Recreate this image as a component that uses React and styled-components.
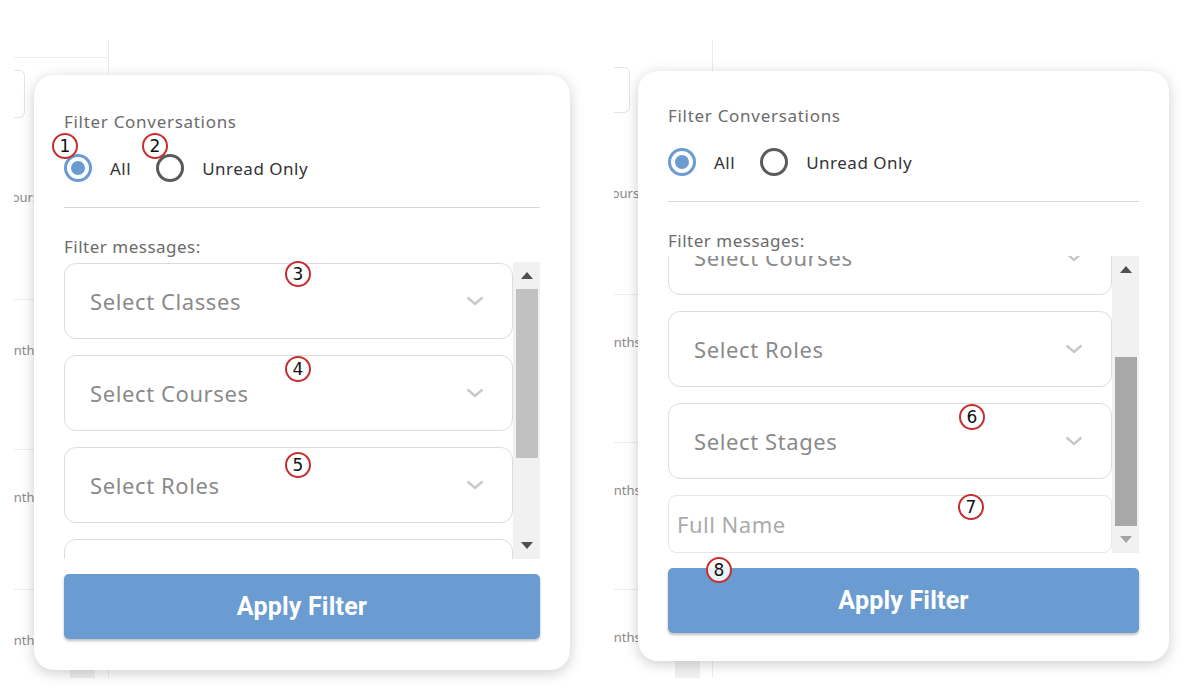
import React, { useLayoutEffect, useRef, useState } from "react";
import styled, { createGlobalStyle } from "styled-components";

const GlobalStyle = createGlobalStyle`
  html, body { margin: 0; padding: 0; background: #fff; }
  body { font-family: "Noto Sans", "Open Sans", sans-serif; }
  * { box-sizing: border-box; }
`;

const Page = styled.div`
  display: flex;
  gap: 24px;
  width: 1190px;
  height: 688px;
  padding: 40px 0 0 14px;
  overflow: hidden;
`;

const Scene = styled.div`
  position: relative;
  width: 576px;
  height: 638px;
`;

/* faint page behind the popup */
const BackPage = styled.div`
  display: flex;
  flex-direction: column;
  width: ${p => p.$width}px;
  height: 100%;
  border-right: 1px solid #ececec;
  overflow: hidden;
`;
const BackHeader = styled.div`
  height: 18px;
  flex-shrink: 0;
  border-bottom: 1px solid ${p => (p.$line ? "#ececec" : "transparent")};
`;
const BackSearch = styled.div`
  flex-shrink: 0;
  margin-top: ${p => p.$top}px;
  width: ${p => p.$w}px;
  height: ${p => p.$h}px;
  border: 1px solid #e4e4e4;
  border-left: none;
  border-radius: 0 6px 6px 0;
`;
const BackRow = styled.div`
  flex-shrink: 0;
  height: ${p => p.$h}px;
  padding-top: ${p => p.$pt}px;
  border-bottom: 1px solid ${p => (p.$last ? "transparent" : "#ececec")};
  font-size: 13px;
  line-height: 18px;
  color: #8a8a8a;
  white-space: nowrap;
  text-indent: ${p => p.$indent}px;
`;
const BackFooter = styled.div`
  flex-shrink: 0;
  margin-left: ${p => p.$left}px;
  width: 25px;
  height: 18px;
  background: #efefef;
`;

const Card = styled.div`
  position: absolute;
  left: ${p => p.$left}px;
  top: ${p => p.$top}px;
  width: ${p => p.$width}px;
  display: flex;
  flex-direction: column;
  padding: ${p => p.$padTop}px 30px ${p => p.$padBottom}px;
  background: #fff;
  border-radius: 20px;
  box-shadow: 0 3px 14px rgba(0, 0, 0, 0.2);
`;

const Title = styled.div`
  font-size: 17px;
  line-height: 22px;
  letter-spacing: 0.7px;
  color: #6b6b6b;
`;

const RadioRow = styled.div`
  display: flex;
  align-items: center;
  height: 30px;
  margin-top: 20px;
`;
const RadioOption = styled.label`
  display: flex;
  align-items: center;
  gap: 18px;
  margin-right: 25px;
  font-size: 17px;
  letter-spacing: 0.5px;
  color: #333;
`;
const RadioDot = styled.span`
  position: relative;
  width: 28px;
  height: 28px;
  border-radius: 50%;
  border: 3px solid ${p => (p.$checked ? "#6a9bd1" : "#5a5a5a")};
  &::after {
    content: "";
    display: ${p => (p.$checked ? "block" : "none")};
    position: absolute;
    left: 4px;
    top: 4px;
    width: 14px;
    height: 14px;
    border-radius: 50%;
    background: #6a9bd1;
  }
`;

const Divider = styled.div`
  height: 1px;
  margin-top: 24px;
  background: #d6d6db;
`;

const SectionLabel = styled.div`
  margin-top: 28px;
  font-size: 17px;
  line-height: 22px;
  color: #6b6b6b;
  letter-spacing: 0.5px;
`;

const ScrollArea = styled.div`
  display: flex;
  height: 297px;
  margin-top: 4px;
`;
const Viewport = styled.div`
  flex: 1;
  display: flex;
  flex-direction: column;
  gap: 16px;
  padding-top: 1px;
  overflow: hidden;
`;
const Select = styled.div`
  flex-shrink: 0;
  display: flex;
  align-items: center;
  justify-content: space-between;
  height: 76px;
  padding: 0 28px 0 25px;
  border: 1px solid #dcdcdc;
  border-radius: 12px;
  font-size: 22px;
  letter-spacing: 0.6px;
  color: #8a8a8a;
`;
const TextInput = styled.input`
  flex-shrink: 0;
  height: 58px;
  padding: 0 8px;
  border: 1px solid #e6e6e6;
  border-radius: 8px;
  font-family: inherit;
  font-size: 22px;
  letter-spacing: 0.5px;
  color: #333;
  outline: none;
  &::placeholder { color: #ababab; }
`;

const Scrollbar = styled.div`
  display: flex;
  flex-direction: column;
  width: 27px;
  background: #f1f1f1;
`;
const ScrollButton = styled.div`
  display: flex;
  align-items: center;
  justify-content: center;
  height: 27px;
  flex-shrink: 0;
  &::before {
    content: "";
    border-left: 6px solid transparent;
    border-right: 6px solid transparent;
    ${p => (p.$down ? "border-top" : "border-bottom")}: 7px solid ${p => (p.$disabled ? "#a3a3a3" : "#505050")};
  }
`;
const Track = styled.div`
  position: relative;
  flex: 1;
`;
const Thumb = styled.div`
  position: absolute;
  left: 3px;
  right: 2px;
  background: ${p => (p.$active ? "#a8a8a8" : "#c1c1c1")};
`;

const ApplyButton = styled.button`
  height: 65px;
  margin-top: 15px;
  border: none;
  border-radius: 5px;
  background: #6a9bd1;
  box-shadow: 0 2px 3px rgba(0, 0, 0, 0.25);
  color: #fff;
  font-family: Roboto, "Noto Sans", sans-serif;
  font-weight: 700;
  font-size: 25px;
  letter-spacing: 0.2px;
`;

const Marker = styled.span`
  position: absolute;
  left: ${p => p.$x}px;
  top: ${p => p.$y}px;
  z-index: 5;
  display: flex;
  align-items: center;
  justify-content: center;
  width: 26px;
  height: 26px;
  margin: -13px 0 0 -13px;
  border: 2.5px solid #c62f2f;
  border-radius: 50%;
  background: rgba(255, 255, 255, 0.85);
  font-family: "DejaVu Sans", sans-serif;
  font-size: 17px;
  line-height: 1;
  color: #111;
`;

const Chevron = () => (
  <svg width="18" height="10" viewBox="0 0 18 10">
    <polyline points="1.5,1.5 9,8 16.5,1.5" fill="none" stroke="#c8c8c8" strokeWidth="2.4" />
  </svg>
);

const FilterScroll = ({ atBottom }) => {
  const ref = useRef(null);
  const [thumb, setThumb] = useState({ top: 0, height: 0 });
  useLayoutEffect(() => {
    const el = ref.current;
    if (atBottom) el.scrollTop = el.scrollHeight;
    const track = el.clientHeight - 54;
    const h = (track * el.clientHeight) / el.scrollHeight;
    const max = el.scrollHeight - el.clientHeight;
    setThumb({ height: h, top: max > 0 ? (el.scrollTop / max) * (track - h) : 0 });
  }, [atBottom]);
  return (
    <ScrollArea>
      <Viewport ref={ref}>
        {["Select Classes", "Select Courses", "Select Roles", "Select Stages"].map(s => (
          <Select key={s}>
            {s}
            <Chevron />
          </Select>
        ))}
        <TextInput placeholder="Full Name" />
      </Viewport>
      <Scrollbar>
        <ScrollButton />
        <Track>
          <Thumb $active={atBottom} style={{ top: thumb.top, height: thumb.height }} />
        </Track>
        <ScrollButton $down $disabled={atBottom} />
      </Scrollbar>
    </ScrollArea>
  );
};

const scenes = [
  {
    back: {
      width: 95,
      line: true,
      search: [12, 11, 48],
      rows: [[182, 70, "Hours", -12], [150, 41, "Months", -20], [140, 38, "Months", -20], [73, 41, "Months", -20]],
      footer: 56,
    },
    card: { left: 20, top: 35, width: 536, padTop: 36, padBottom: 31 },
    atBottom: false,
    markers: [[31, 71, 1], [121, 71, 2], [264, 199, 3], [264, 294, 4], [264, 390, 5]],
  },
  {
    back: {
      width: 99,
      line: false,
      search: [9, 16, 46],
      rows: [[182, 71, "Hours", -12], [148, 38, "Months", -20], [147, 38, "Months", -20], [70, 38, "Months", -20]],
      footer: 61,
    },
    card: { left: 24, top: 31, width: 531, padTop: 34, padBottom: 28 },
    atBottom: true,
    markers: [[334, 346, 6], [333, 436, 7], [81, 499, 8]],
  },
];

export default function App() {
  return (
    <>
      <GlobalStyle />
      <Page>
        {scenes.map((sc, i) => (
          <Scene key={i}>
            <BackPage $width={sc.back.width}>
              <BackHeader $line={sc.back.line} />
              <BackSearch $top={sc.back.search[0]} $w={sc.back.search[1]} $h={sc.back.search[2]} />
              {sc.back.rows.map(([h, pt, t, indent], j) => (
                <BackRow key={j} $h={h} $pt={pt} $indent={indent} $last={j === sc.back.rows.length - 1}>
                  {t}
                </BackRow>
              ))}
              <BackFooter $left={sc.back.footer} />
            </BackPage>
            <Card
              $left={sc.card.left}
              $top={sc.card.top}
              $width={sc.card.width}
              $padTop={sc.card.padTop}
              $padBottom={sc.card.padBottom}
            >
              <Title>Filter Conversations</Title>
              <RadioRow>
                <RadioOption>
                  <RadioDot $checked />
                  All
                </RadioOption>
                <RadioOption>
                  <RadioDot />
                  Unread Only
                </RadioOption>
              </RadioRow>
              <Divider />
              <SectionLabel>Filter messages:</SectionLabel>
              <FilterScroll atBottom={sc.atBottom} />
              <ApplyButton>Apply Filter</ApplyButton>
              {sc.markers.map(([x, y, n]) => (
                <Marker key={n} $x={x} $y={y}>
                  {n}
                </Marker>
              ))}
            </Card>
          </Scene>
        ))}
      </Page>
    </>
  );
}
